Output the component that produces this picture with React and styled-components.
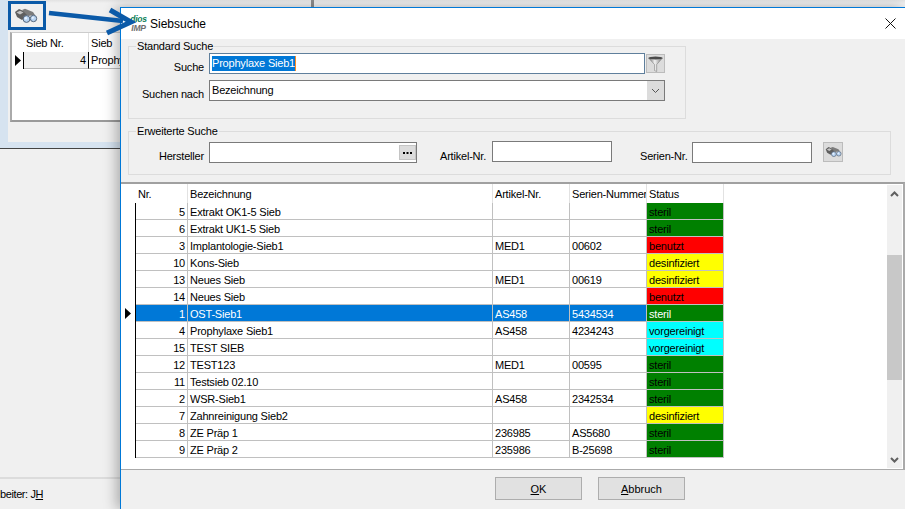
import React from "react";
import styled, { createGlobalStyle } from "styled-components";

const Global = createGlobalStyle`
  html, body { margin: 0; padding: 0; overflow: hidden; background: #f0f0f0; }
  body { font-family: "Liberation Sans", Arial, sans-serif; font-size: 11px; letter-spacing: -0.2px; color: #000; }
  * { box-sizing: border-box; }
`;

const Stage = styled.div`
  position: relative;
  width: 905px;
  height: 509px;
  overflow: hidden;
  background: #f0f0f0;
`;

/* ---------- background window ---------- */
const BackWindow = styled.div`
  display: flex;
  flex-direction: column;
  width: 905px;
  height: 509px;
`;
const BackFrame = styled.div`
  height: 148px;
  flex: none;
  border-left: 8px solid #d6e3f0;
  border-bottom: 6px solid #d6e3f0;
  background: #f0f0f0;
  display: flex;
  flex-direction: column;
`;
const BackEdge = styled.div`
  height: 1px;
  flex: none;
  background: #444;
`;
const BackToolbar = styled.div`
  height: 32px;
  flex: none;
  padding-top: 1px;
  display: flex;
  align-items: flex-start;
  background: linear-gradient(#e2e2e2, #f0f0f0 3px);
`;
const HighlightButton = styled.div`
  width: 38px;
  height: 29px;
  border: 3px solid #0b5aa8;
  padding-right: 3px;
  background: #f0f0f0;
  display: flex;
  align-items: center;
  justify-content: center;
`;
const TopDivider = styled.div`
  width: 3px;
  height: 7px;
  margin-left: 265px;
  margin-top: -1px;
  background: #8c8c8c;
`;
const BackGrid = styled.div`
  margin-left: 2px;
  height: 90px;
  flex: none;
  background: #fff;
  border-left: 2px solid #aaa;
  border-top: 1px solid #ccc;
  border-bottom: 2px solid #9a9a9a;
`;
const BackHeader = styled.div`
  display: grid;
  grid-template-columns: 12px 65px 1fr;
  height: 19px;
  line-height: 20px;
`;
const BackHeadCell = styled.div`
  padding-left: 2px;
  border-right: 1px solid #e2e2e2;
`;
const BackRow = styled.div`
  display: grid;
  grid-template-columns: 12px 65px 1fr;
  height: 17px;
  line-height: 16px;
`;
const BackMarker = styled.div`
  display: flex;
  align-items: center;
  padding-left: 3px;
  border-right: 1px solid #000;
`;
const BackNumCell = styled.div`
  background: #f0f0f0;
  text-align: right;
  padding-right: 2px;
  border-right: 1px solid #000;
  border-bottom: 1px solid #bbb;
`;
const BackTextCell = styled.div`
  padding-left: 2px;
  border-bottom: 1px solid #bbb;
  white-space: nowrap;
`;
const BackSpacer = styled.div`
  flex: 1;
`;
const StatusBar = styled.div`
  height: 32px;
  flex: none;
  border-top: 2px solid #dcdcdc;
  padding-top: 7px;
`;
const StatusText = styled.div`
  white-space: nowrap;
  line-height: 16px;
  letter-spacing: -0.4px;
`;

/* ---------- arrow overlay ---------- */
const ArrowLayer = styled.svg`
  position: absolute;
  left: 45px;
  top: 5px;
  z-index: 5;
`;

/* ---------- dialog ---------- */
const Dialog = styled.div`
  position: absolute;
  left: 120px;
  top: 7px;
  width: 785px;
  height: 502px;
  display: flex;
  flex-direction: column;
  border-left: 1px solid #0078d7;
  border-top: 1px solid #0078d7;
  background: #f0f0f0;
  box-shadow: -4px 0 12px rgba(0, 0, 0, 0.28);
`;
const TitleBar = styled.div`
  height: 31px;
  flex: none;
  background: #fff;
  display: flex;
  align-items: center;
  padding: 0 9px 0 9px;
`;
const Logo = styled.div`
  width: 20px;
  padding-right: 3px;
  display: flex;
  flex-direction: column;
  align-items: center;
  font-style: italic;
  font-size: 8.5px;
  line-height: 9px;
  font-weight: 700;
  letter-spacing: -0.2px;
`;
const LogoTop = styled.span`
  color: #0a7d55;
`;
const LogoBottom = styled.span`
  color: #6d6d6d;
`;
const Title = styled.div`
  font-size: 12px;
  letter-spacing: 0;
  flex: 1;
`;
const Content = styled.div`
  padding-left: 7px;
  flex: none;
  display: flex;
  flex-direction: column;
`;
const Group = styled.div`
  position: relative;
  width: ${(p) => p.$w}px;
  height: ${(p) => p.$h}px;
  margin-top: ${(p) => p.$mt}px;
  padding-top: ${(p) => p.$pt}px;
  border: 1px solid #dcdcdc;
`;
const Legend = styled.span`
  position: absolute;
  left: 7px;
  top: -7px;
  padding: 0 1px;
  line-height: 13px;
  background: #f0f0f0;
  white-space: nowrap;
`;
const FormRow = styled.div`
  display: flex;
  align-items: flex-end;
  height: 21px;
  margin-bottom: 6px;
`;
const Label = styled.label`
  flex: none;
  width: ${(p) => p.$w}px;
  margin-left: ${(p) => p.$ml || 0}px;
  margin-right: ${(p) => p.$mr || 5}px;
  text-align: right;
  line-height: 14px;
  white-space: nowrap;
`;
const Field = styled.div`
  position: relative;
  width: ${(p) => p.$w}px;
  height: 21px;
  flex: none;
  background: #fff;
  border: 1px solid ${(p) => p.$border || "#7a7a7a"};
  margin-bottom: ${(p) => p.$mb || 0}px;
  padding: 0 2px;
  line-height: 18px;
  display: flex;
  align-items: flex-start;
  white-space: nowrap;
`;
const Selected = styled.span`
  background: #0078d7;
  color: #fff;
  height: 15px;
  line-height: 15px;
  margin-top: 2px;
  border-right: 1px solid #ff8a1e;
`;
const IconButton = styled.div`
  flex: none;
  display: flex;
  align-items: center;
  justify-content: center;
  width: ${(p) => p.$w}px;
  height: ${(p) => p.$h}px;
  background: #dcdcdc;
  border: 1px solid #bcbcbc;
  margin-left: ${(p) => p.$ml || 0}px;
  margin-bottom: ${(p) => p.$mb || 0}px;
`;
const InnerButton = styled.div`
  position: absolute;
  top: 2px;
  right: 0;
  width: 17px;
  height: 15px;
  background: #dcdcdc;
  border: 1px solid #c4c4c4;
  display: flex;
  align-items: center;
  justify-content: center;
`;
const ComboButton = styled(InnerButton)`
  top: 0;
  height: 19px;
  border: none;
`;

/* ---------- table ---------- */
const TablePanel = styled.div`
  margin: 7px 0 0 -7px;
  width: 784px;
  height: 288px;
  flex: none;
  display: flex;
  background: #fff;
  border-top: 2px solid #a0a0a0;
  border-bottom: 1px solid #aaa;
  border-right: 2px solid #aaa;
`;
const TableArea = styled.div`
  width: 766px;
  flex: none;
`;
const HeaderRow = styled.div`
  display: grid;
  grid-template-columns: 15px 52px 305px 77px 77px 77px;
  height: 19px;
  line-height: 20px;
`;
const HeaderCell = styled.div`
  padding-left: 2px;
  border-right: 1px solid #e2e2e2;
  white-space: nowrap;
  overflow: hidden;
`;
const HeaderBlank = styled.div``;
const DataRow = styled.div`
  display: grid;
  grid-template-columns: 15px 52px 305px 77px 77px 77px;
  height: 17px;
  line-height: 18px;
`;
const Marker = styled.div`
  border-right: 1px solid #000;
  display: flex;
  align-items: center;
  padding-left: 4px;
`;
const Cell = styled.div`
  padding: 0 2px;
  white-space: nowrap;
  overflow: hidden;
  border-right: 1px solid #c0c0c0;
  border-bottom: 1px solid #c0c0c0;
  text-align: ${(p) => (p.$num ? "right" : "left")};
  background: ${(p) => (p.$sel ? "#0078d7" : "#fff")};
  color: ${(p) => (p.$sel ? "#fff" : "#000")};
`;
const StatusCell = styled(Cell)`
  background: ${(p) => p.$color};
`;
const Scrollbar = styled.div`
  width: 15px;
  margin-top: 1px;
  background: #f0f0f0;
  display: flex;
  flex-direction: column;
  align-items: center;
  height: 283px;
`;
const ScrollEnd = styled.div`
  height: 17px;
  width: 100%;
  display: flex;
  align-items: center;
  justify-content: center;
`;
const ScrollTrack = styled.div`
  flex: 1;
  width: 100%;
  padding-top: 53px;
`;
const ScrollThumb = styled.div`
  height: 125px;
  background: #c8c8c8;
`;
const Footer = styled.div`
  flex: 1;
  display: flex;
  gap: 16px;
  padding: 7px 0 0 374px;
  align-items: flex-start;
`;
const Button = styled.div`
  width: 87px;
  height: 23px;
  background: #e1e1e1;
  border: 1px solid #adadad;
  text-align: center;
  line-height: 22px;
  letter-spacing: 0;
`;

/* ---------- drawings ---------- */
const Binoculars = ({ w = 24, h = 16 }) => (
  <svg width={w} height={h} viewBox="0 0 24 16">
    <path d="M1 4 L5 1 L12 4 L14 7 L8 12 L3 9 Z" fill="#5f5f5f" />
    <path d="M8 2 L11 0.8 L19 4 L21 7 L14 8 Z" fill="#7c7c7c" />
    <path d="M2.5 4.5 L6 2.8 L9.5 4.5 L6 6.5 Z" fill="#c4c4c4" />
    <circle cx="12.5" cy="11" r="3.4" fill="#b9d4f2" stroke="#55657a" strokeWidth="1" />
    <circle cx="19.5" cy="10.5" r="3.2" fill="#b9d4f2" stroke="#55657a" strokeWidth="1" />
    <circle cx="11.8" cy="10.3" r="1.2" fill="#e9f3ff" />
    <circle cx="18.8" cy="9.8" r="1.1" fill="#e9f3ff" />
  </svg>
);
const Funnel = () => (
  <svg width="15" height="16" viewBox="0 0 15 16">
    <defs>
      <linearGradient id="fg" x1="0" x2="1" y1="0" y2="0">
        <stop offset="0" stopColor="#666" />
        <stop offset="0.45" stopColor="#f2f2f2" />
        <stop offset="1" stopColor="#777" />
      </linearGradient>
    </defs>
    <path d="M0.5 2 H14.5 L8.7 8.5 V15.5 L6.5 14.5 V8.5 Z" fill="url(#fg)" stroke="#777" strokeWidth="0.5" />
    <ellipse cx="7.5" cy="2" rx="7" ry="1.4" fill="#4a4a4a" />
  </svg>
);
const Triangle = () => (
  <svg width="6" height="11" viewBox="0 0 6 11">
    <path d="M0 0 L6 5.5 L0 11 Z" fill="#000" />
  </svg>
);
const Chevron = ({ up, color = "#606060", weight = 2 }) => (
  <svg width="9" height="6" viewBox="0 0 9 6">
    <path d={up ? "M1 5 L4.5 1.5 L8 5" : "M1 1 L4.5 4.5 L8 1"} fill="none" stroke={color} strokeWidth={weight} />
  </svg>
);
const CloseX = () => (
  <svg width="11" height="11" viewBox="0 0 11 11">
    <path d="M0.5 0.5 L10.5 10.5 M10.5 0.5 L0.5 10.5" stroke="#111" strokeWidth="1" />
  </svg>
);
const Dots = () => (
  <svg width="9" height="2" viewBox="0 0 9 2">
    <path d="M0 0h2v2H0zM3.5 0h2v2h-2zM7 0h2v2H7z" fill="#000" />
  </svg>
);

const STATUS = {
  steril: "#008000",
  benutzt: "#ff0000",
  desinfiziert: "#ffff00",
  vorgereinigt: "#00ffff",
};

const ROWS = [
  ["5", "Extrakt OK1-5 Sieb", "", "", "steril"],
  ["6", "Extrakt UK1-5 Sieb", "", "", "steril"],
  ["3", "Implantologie-Sieb1", "MED1", "00602", "benutzt"],
  ["10", "Kons-Sieb", "", "", "desinfiziert"],
  ["13", "Neues Sieb", "MED1", "00619", "desinfiziert"],
  ["14", "Neues Sieb", "", "", "benutzt"],
  ["1", "OST-Sieb1", "AS458", "5434534", "steril"],
  ["4", "Prophylaxe Sieb1", "AS458", "4234243", "vorgereinigt"],
  ["15", "TEST SIEB", "", "", "vorgereinigt"],
  ["12", "TEST123", "MED1", "00595", "steril"],
  ["11", "Testsieb 02.10", "", "", "steril"],
  ["2", "WSR-Sieb1", "AS458", "2342534", "steril"],
  ["7", "Zahnreinigung Sieb2", "", "", "desinfiziert"],
  ["8", "ZE Präp 1", "236985", "AS5680", "steril"],
  ["9", "ZE Präp 2", "235986", "B-25698", "steril"],
];

export default function App() {
  return (
    <Stage>
      <Global />
      <BackWindow>
        <BackFrame>
          <BackToolbar>
            <HighlightButton>
              <Binoculars />
            </HighlightButton>
            <TopDivider />
          </BackToolbar>
          <BackGrid>
            <BackHeader>
              <div />
              <BackHeadCell>Sieb Nr.</BackHeadCell>
              <BackHeadCell>Sieb</BackHeadCell>
            </BackHeader>
            <BackRow>
              <BackMarker>
                <Triangle />
              </BackMarker>
              <BackNumCell>4</BackNumCell>
              <BackTextCell>Prophylaxe Sieb1</BackTextCell>
            </BackRow>
          </BackGrid>
        </BackFrame>
        <BackEdge />
        <BackSpacer />
        <StatusBar>
          <StatusText>
            beiter: J<u>H</u>
          </StatusText>
        </StatusBar>
      </BackWindow>

      <Dialog>
        <TitleBar>
          <Logo>
            <LogoTop>dios</LogoTop>
            <LogoBottom>IMP</LogoBottom>
          </Logo>
          <Title>Siebsuche</Title>
          <CloseX />
        </TitleBar>
        <Content>
          <Group $w={558} $h={73} $mt={7} $pt={6}>
            <Legend>Standard Suche</Legend>
            <FormRow>
              <Label $w={75}>Suche</Label>
              <Field $w={436} $border="#5f7f9c">
                <Selected>Prophylaxe Sieb1</Selected>
              </Field>
              <IconButton $w={19} $h={19} $ml={1} $mb={1}>
                <Funnel />
              </IconButton>
            </FormRow>
            <FormRow>
              <Label $w={75}>Suchen nach</Label>
              <Field $w={456}>
                Bezeichnung
                <ComboButton>
                  <Chevron color="#555" weight={1} />
                </ComboButton>
              </Field>
            </FormRow>
          </Group>
          <Group $w={763} $h={44} $mt={12} $pt={10}>
            <Legend>Erweiterte Suche</Legend>
            <FormRow>
              <Label $w={75}>Hersteller</Label>
              <Field $w={208}>
                <InnerButton>
                  <Dots />
                </InnerButton>
              </Field>
              <Label $w={46} $ml={23} $mr={6}>
                Artikel-Nr.
              </Label>
              <Field $w={120} $mb={1} />
              <Label $w={46} $ml={28} $mr={6}>
                Serien-Nr.
              </Label>
              <Field $w={120} />
              <IconButton $w={20} $h={20} $ml={11} $mb={1}>
                <Binoculars w={17} h={12} />
              </IconButton>
            </FormRow>
          </Group>
          <TablePanel>
            <TableArea>
              <HeaderRow>
                <HeaderBlank />
                <HeaderCell>Nr.</HeaderCell>
                <HeaderCell>Bezeichnung</HeaderCell>
                <HeaderCell>Artikel-Nr.</HeaderCell>
                <HeaderCell>Serien-Nummer</HeaderCell>
                <HeaderCell>Status</HeaderCell>
              </HeaderRow>
              {ROWS.map((r, i) => {
                const sel = i === 6;
                return (
                  <DataRow key={i}>
                    <Marker>{sel && <Triangle />}</Marker>
                    <Cell $num $sel={sel}>{r[0]}</Cell>
                    <Cell $sel={sel}>{r[1]}</Cell>
                    <Cell $sel={sel}>{r[2]}</Cell>
                    <Cell $sel={sel}>{r[3]}</Cell>
                    <StatusCell $color={STATUS[r[4]]} $sel={sel}>{r[4]}</StatusCell>
                  </DataRow>
                );
              })}
            </TableArea>
            <Scrollbar>
              <ScrollEnd>
                <Chevron up />
              </ScrollEnd>
              <ScrollTrack>
                <ScrollThumb />
              </ScrollTrack>
              <ScrollEnd>
                <Chevron />
              </ScrollEnd>
            </Scrollbar>
          </TablePanel>
        </Content>
        <Footer>
          <Button>
            <u>O</u>K
          </Button>
          <Button>
            <u>A</u>bbruch
          </Button>
        </Footer>
      </Dialog>

      <ArrowLayer width="95" height="35" viewBox="0 0 95 35">
        <path d="M4 8 L78 16" stroke="#0b5aa8" strokeWidth="4.5" fill="none" />
        <path d="M65 5 L86 17 L62 28" stroke="#0b5aa8" strokeWidth="5" fill="none" />
      </ArrowLayer>
    </Stage>
  );
}
